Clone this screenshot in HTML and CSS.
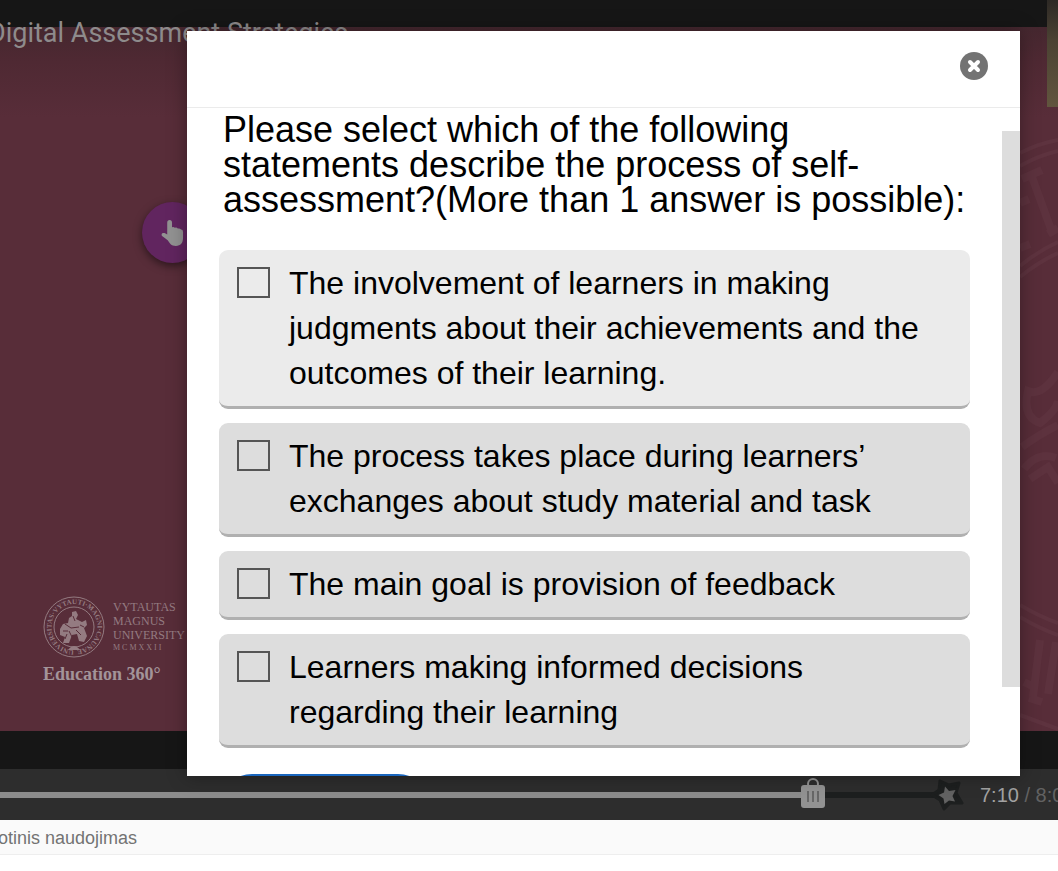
FILE: index.html
```html
<!DOCTYPE html>
<html lang="lt">
<head>
    <meta charset="UTF-8">
    <meta name="viewport" content="width=device-width, initial-scale=1.0">
    <title>Digital Assessment Strategies</title>
    <link rel="stylesheet" href="styles.css">
</head>
<body>
    <main class="player">
        <div class="video">
            <div class="picture">
                <svg class="watermark" viewBox="0 0 38 704" preserveAspectRatio="none" aria-hidden="true">
                    <path d="M0 126Q20 116 38 113M0 139Q20 128 38 124M0 239Q18 224 38 215M0 250Q18 235 38 226"/>
                    <path d="M0 578Q20 590 38 596M0 590Q20 602 38 608M0 688L38 702"/>
                    <path class="thick" d="M12 150L32 205M2 152L22 143M28 207L38 201M0 176L9 172M0 221L10 217"/>
                    <path class="thick" d="M20 613L13 670M36 615L28 667M9 671L22 675M4 655L12 659"/>
                    <path class="thick" d="M38 345Q22 370 8 364Q2 390 20 396Q36 384 38 374M2 420Q18 408 38 398M4 442Q18 424 36 431M10 452L28 440L38 456"/>
                </svg>
                <div class="brand">
                    <svg class="seal" viewBox="0 0 62 62" aria-hidden="true">
                        <defs>
                            <path id="ring" d="M31 54A23 23 0 1 1 32 54"/>
                        </defs>
                        <circle cx="31" cy="31" r="30"/>
                        <circle cx="31" cy="31" r="20"/>
                        <text><textPath href="#ring">UNIVERSITAS·VYTAUTI·MAGNI·CAUNAE</textPath></text>
                        <path class="knight" d="M29 16l4-1 2 4-2 4 6 3 4-2 1 5-3 3 3 8-3 6-5-1-2-7-5 1-3 8-6 0 2-6-5-2 0-6 3-5 5-1 1-5 3-2z"/>
                        <path class="cut" d="M22 28l6 4 8-1M26 35l3 6M33 34l5 5M30 20l2 5M20 35h5M37 29l4 2M24 38l-2 5"/>
                        <path class="knight" d="M25 54q6-8 12 0z"/>
                    </svg>
                    <div class="university">
                        VYTAUTAS<br>MAGNUS<br>UNIVERSITY
                        <small>MCMXXII</small>
                    </div>
                    <div class="education">Education 360°</div>
                </div>
            </div>
            <div class="video-title">Digital Assessment Strategies</div>
            <div class="thumbnail"></div>
            <button class="hotspot" type="button" aria-label="Open question">
                <svg viewBox="0 0 24 28" aria-hidden="true">
                    <path d="M9 .5C10.700 .5 11.500 1.800 11.500 3.200V8q1.700-.8 2.900.6 2-.8 3.100.8 2.200-.6 3.400 1 2.100 0 2.100 2.600V19c0 5.500-2.500 8.500-7.500 8.500-5 0-6.500-3-8.500-6L1.500 17.500C.2 16.400.3 14 2.500 14c1.500 0 3 .7 4 1.500V3.200C6.500 1.700 7.400.5 9 .5z"/>
                </svg>
            </button>
        </div>

        <div class="controls">
            <input class="seek" type="range" min="0" max="1000" value="877" aria-label="Seek">
            <svg class="star" viewBox="0 0 34 34" aria-hidden="true">
                <path class="star-back" d="M10 3L19 7 29 5 26 15 32 25 20 25 14 31 10 22 2 17 9 12z"/>
                <path d="M15 8.500L19 13 25.500 12 22.500 18 25 23.500 19 22.500 14.500 26 13.500 20.500 8.500 17 14 14.500z"/>
            </svg>
            <div class="time"><span>7:10</span> / 8:02</div>
        </div>

        <section class="dialog" role="dialog" aria-labelledby="question">
            <div class="dialog-header">
                <button class="close" type="button" aria-label="Close">
                    <svg viewBox="0 0 28 28" aria-hidden="true">
                        <circle cx="14" cy="14" r="14"/>
                        <path d="M10 10L18 18M18 10L10 18"/>
                    </svg>
                </button>
            </div>
            <form class="dialog-body">
                <h1 id="question">Please select which of the following statements describe the process of self-assessment?(More than 1 answer is possible):</h1>
                <div class="answers">
                    <label class="answer active">
                        <input type="checkbox" name="answer">
                        <span>The involvement of learners in making judgments about their achievements and the outcomes of their learning.</span>
                    </label>
                    <label class="answer">
                        <input type="checkbox" name="answer">
                        <span>The process takes place during learners’ exchanges about study material and task</span>
                    </label>
                    <label class="answer">
                        <input type="checkbox" name="answer">
                        <span>The main goal is provision of feedback</span>
                    </label>
                    <label class="answer">
                        <input type="checkbox" name="answer">
                        <span>Learners making informed decisions regarding their learning</span>
                    </label>
                </div>
                <button class="check" type="button" aria-label="Check"></button>
            </form>
            <div class="scroll-thumb"></div>
        </section>
    </main>

    <footer>
        <a href="#">otinis naudojimas</a>
    </footer>
</body>
</html>
```

FILE: styles.css
```css
* {
    box-sizing: border-box;
}

body {
    display: flex;
    flex-direction: column;
    min-height: 100vh;
    margin: 0;
    padding-bottom: 16px;
    background: white;
    font-family: "Liberation Sans", Arial, sans-serif;
    overflow: hidden;
}

button {
    padding: 0;
    border: none;
    background: none;
    cursor: pointer;
}

/* video */
.player {
    position: relative;
    display: flex;
    flex-direction: column;
    flex: 1;
    overflow: hidden;
}

.video {
    position: relative;
    display: flex;
    flex: 1;
    padding: 27px 0 38px;
    background: #161616;
}

.picture {
    position: relative;
    display: flex;
    align-items: flex-end;
    flex: 1;
    padding: 0 0 45px 43px;
    background: linear-gradient(#45272f, #4f2933 35px, #582d39 90px);
}

.watermark {
    position: absolute;
    top: 0;
    right: 0;
    width: 38px;
    height: 100%;
    fill: none;
    stroke: #5e333f;
    stroke-width: 4;
}

.watermark .thick {
    stroke: #5d323e;
    stroke-width: 8;
}

.brand {
    display: grid;
    grid-template-columns: 62px auto;
    column-gap: 8px;
    color: #947b81;
    font-family: "Liberation Serif", serif;
}

.seal {
    width: 62px;
    height: 62px;
    fill: none;
    stroke: #947b81;
    stroke-width: 1;
}

.seal text {
    fill: #947b81;
    stroke: none;
    font-size: 7px;
    font-weight: bold;
}

.seal .knight {
    fill: #947b81;
    stroke: none;
}

.seal .cut {
    stroke: #582d39;
}

.university {
    padding-top: 4px;
    font-size: 12px;
    line-height: 14px;
}

.university small {
    display: block;
    font-size: 8px;
    line-height: 12px;
    letter-spacing: 2px;
}

.education {
    grid-column: 1 / 3;
    color: #a39499;
    font-size: 18px;
    font-weight: bold;
    line-height: 24px;
    padding-top: 4px;
}

.video-title {
    position: absolute;
    top: 18px;
    left: -12px;
    color: #8e8b8c;
    font-family: Roboto, sans-serif;
    font-size: 27px;
    line-height: 30px;
    white-space: nowrap;
}

.thumbnail {
    position: absolute;
    top: 0;
    right: 0;
    width: 11px;
    height: 107px;
    background: linear-gradient(#2d2925, #4b4233 40px, #62553e);
}

.hotspot {
    position: absolute;
    top: 202px;
    left: 142px;
    display: flex;
    align-items: center;
    justify-content: center;
    width: 61px;
    height: 61px;
    border-radius: 50%;
    background: #61255f;
    box-shadow: 0 3px 8px rgba(0, 0, 0, 0.5);
}

.hotspot svg {
    width: 23px;
    height: 28px;
    fill: #929292;
}

/* control bar */
.controls {
    display: flex;
    align-items: center;
    height: 51px;
    background: #2d2d2d;
    white-space: nowrap;
}

.seek {
    flex: 1;
    height: 30px;
    margin: 0;
    appearance: none;
    background: linear-gradient(to right, #8c8c8c 86%, #1d1f1f 86%) center / 100% 6px no-repeat;
    cursor: pointer;
}

.seek::-webkit-slider-thumb {
    appearance: none;
    width: 26px;
    height: 30px;
    margin-top: -4px;
    background: url("data:image/svg+xml,%3Csvg xmlns='http://www.w3.org/2000/svg' viewBox='0 0 26 30'%3E%3Ccircle cx='13' cy='6' r='5' fill='none' stroke='%23929292' stroke-width='2'/%3E%3Crect x='1' y='7' width='24' height='23' rx='3' fill='%23929292'/%3E%3Cpath d='M8 13v11M13 13v11M18 13v11' stroke='%23676767' stroke-width='2'/%3E%3C/svg%3E") no-repeat;
}

.star {
    flex: none;
    width: 34px;
    height: 34px;
    margin-left: -8px;
    fill: #626262;
}

.star-back {
    fill: #1d1f1f;
    stroke: #1d1f1f;
    stroke-width: 3;
    stroke-linejoin: round;
}

.time {
    width: 94px;
    padding-left: 16px;
    overflow: hidden;
    color: #626262;
    font-size: 20px;
    line-height: 24px;
}

.time span {
    color: #a2a2a2;
}

/* question dialog */
.dialog {
    position: absolute;
    top: 31px;
    right: 38px;
    bottom: 44px;
    left: 187px;
    display: flex;
    flex-direction: column;
    overflow: hidden;
    background: white;
}

.video::after {
    content: "";
    position: absolute;
    top: 31px;
    right: 38px;
    bottom: -7px;
    left: 187px;
    box-shadow: 0 0 18px rgba(0, 0, 0, 0.35);
}

.dialog-header {
    display: flex;
    flex: none;
    align-items: center;
    justify-content: flex-end;
    height: 77px;
    padding: 0 32px 6px 0;
    border-bottom: 1px solid #ebebeb;
}

.close {
    display: flex;
}

.close svg {
    width: 28px;
    height: 28px;
    fill: #737373;
}

.close path {
    stroke: white;
    stroke-width: 4;
    stroke-linecap: round;
}

.dialog-body {
    flex: 1;
    padding: 4px 50px 0 32px;
    overflow: hidden;
}

h1 {
    margin: 0 0 33px;
    padding-left: 4px;
    color: black;
    font-size: 36px;
    font-weight: normal;
    line-height: 35px;
}

.answers {
    display: flex;
    flex-direction: column;
    gap: 14px;
}

.answer {
    display: flex;
    align-items: flex-start;
    gap: 19px;
    padding: 11px 36px 10px 18px;
    border-bottom: 3px solid #b0b0b0;
    border-radius: 9px;
    background: #dddddd;
    color: black;
    font-size: 32px;
    line-height: 45px;
    cursor: pointer;
}

.answer.active {
    background: #ebebeb;
}

.answer input {
    flex: none;
    width: 33px;
    height: 31px;
    margin: 6px 0 0;
    appearance: none;
    border: 2px solid #555555;
}

.check {
    display: block;
    width: 212px;
    height: 66px;
    margin-top: 26px;
    border-radius: 33px;
    background: #1a66bd;
}

.scroll-thumb {
    position: absolute;
    top: 100px;
    right: 0;
    bottom: 89px;
    width: 18px;
    background: #dddddd;
}

footer {
    height: 35px;
    border-bottom: 1px solid #eeeeee;
    background: #fafafa;
    overflow: hidden;
}

footer a {
    display: block;
    margin-left: -2px;
    color: #737373;
    font-size: 18px;
    line-height: 36px;
    text-decoration: none;
}
```
